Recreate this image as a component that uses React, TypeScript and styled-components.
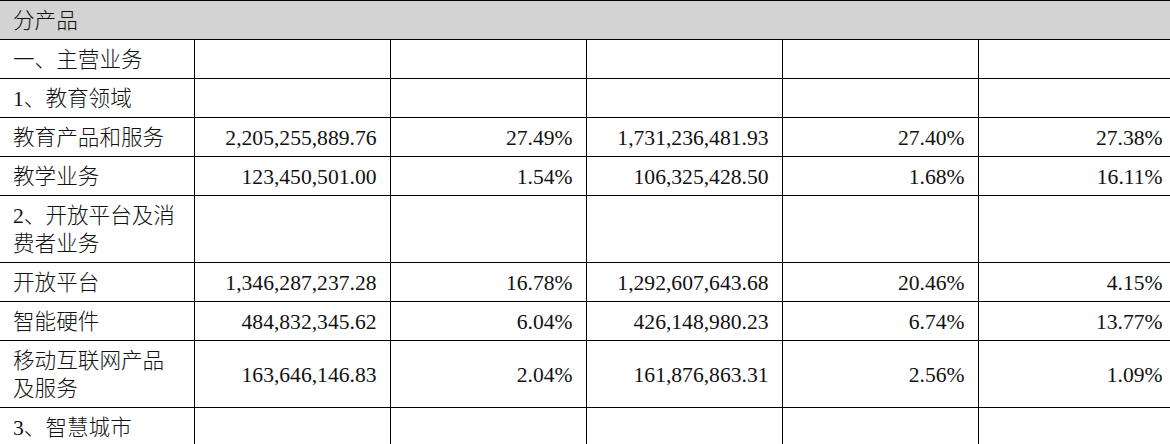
import React from "react";
import styled, { createGlobalStyle } from "styled-components";

const Global = createGlobalStyle`
  html, body { margin: 0; padding: 0; background: #ffffff; overflow: hidden; }
  body { font-family: "Liberation Serif", "Noto Sans CJK SC", serif; color: #111111; }
`;

const Table = styled.table`
  border-collapse: collapse;
  table-layout: fixed;
  width: 1176px;
  font-size: 21.6px;
  line-height: 28px;
  font-weight: 300;
`;

const Row = styled.tr``;

const Cell = styled.td<{ $num?: boolean }>`
  border: 1px solid #000000;
  padding: 6px 13px 4px 13px;
  text-align: ${(p) => (p.$num ? "right" : "left")};
  vertical-align: middle;
  white-space: ${(p) => (p.$num ? "nowrap" : "normal")};
  &:first-child { border-left: none; }
`;

const HeadCell = styled.td`
  border: 1px solid #000000;
  border-left: none;
  background: #d3d3d3;
  padding: 6px 13px 4px 13px;
  height: 28px;
  text-align: left;
`;

type RowData = [string, string, string, string, string, string];

const rows: RowData[] = [
  ["一、主营业务", "", "", "", "", ""],
  ["1、教育领域", "", "", "", "", ""],
  ["教育产品和服务", "2,205,255,889.76", "27.49%", "1,731,236,481.93", "27.40%", "27.38%"],
  ["教学业务", "123,450,501.00", "1.54%", "106,325,428.50", "1.68%", "16.11%"],
  ["2、开放平台及消费者业务", "", "", "", "", ""],
  ["开放平台", "1,346,287,237.28", "16.78%", "1,292,607,643.68", "20.46%", "4.15%"],
  ["智能硬件", "484,832,345.62", "6.04%", "426,148,980.23", "6.74%", "13.77%"],
  ["移动互联网产品及服务", "163,646,146.83", "2.04%", "161,876,863.31", "2.56%", "1.09%"],
  ["3、智慧城市", "", "", "", "", ""],
];

const widths = [194, 196, 196, 196, 196, 198];

export default function App() {
  return (
    <>
      <Global />
      <Table>
        <colgroup>
          {widths.map((w, i) => (
            <col key={i} style={{ width: w }} />
          ))}
        </colgroup>
        <tbody>
          <Row>
            <HeadCell colSpan={6}>分产品</HeadCell>
          </Row>
          {rows.map((r, i) => (
            <Row key={i}>
              {r.map((c, j) => (
                <Cell key={j} $num={j > 0}>
                  {c}
                </Cell>
              ))}
            </Row>
          ))}
        </tbody>
      </Table>
    </>
  );
}
